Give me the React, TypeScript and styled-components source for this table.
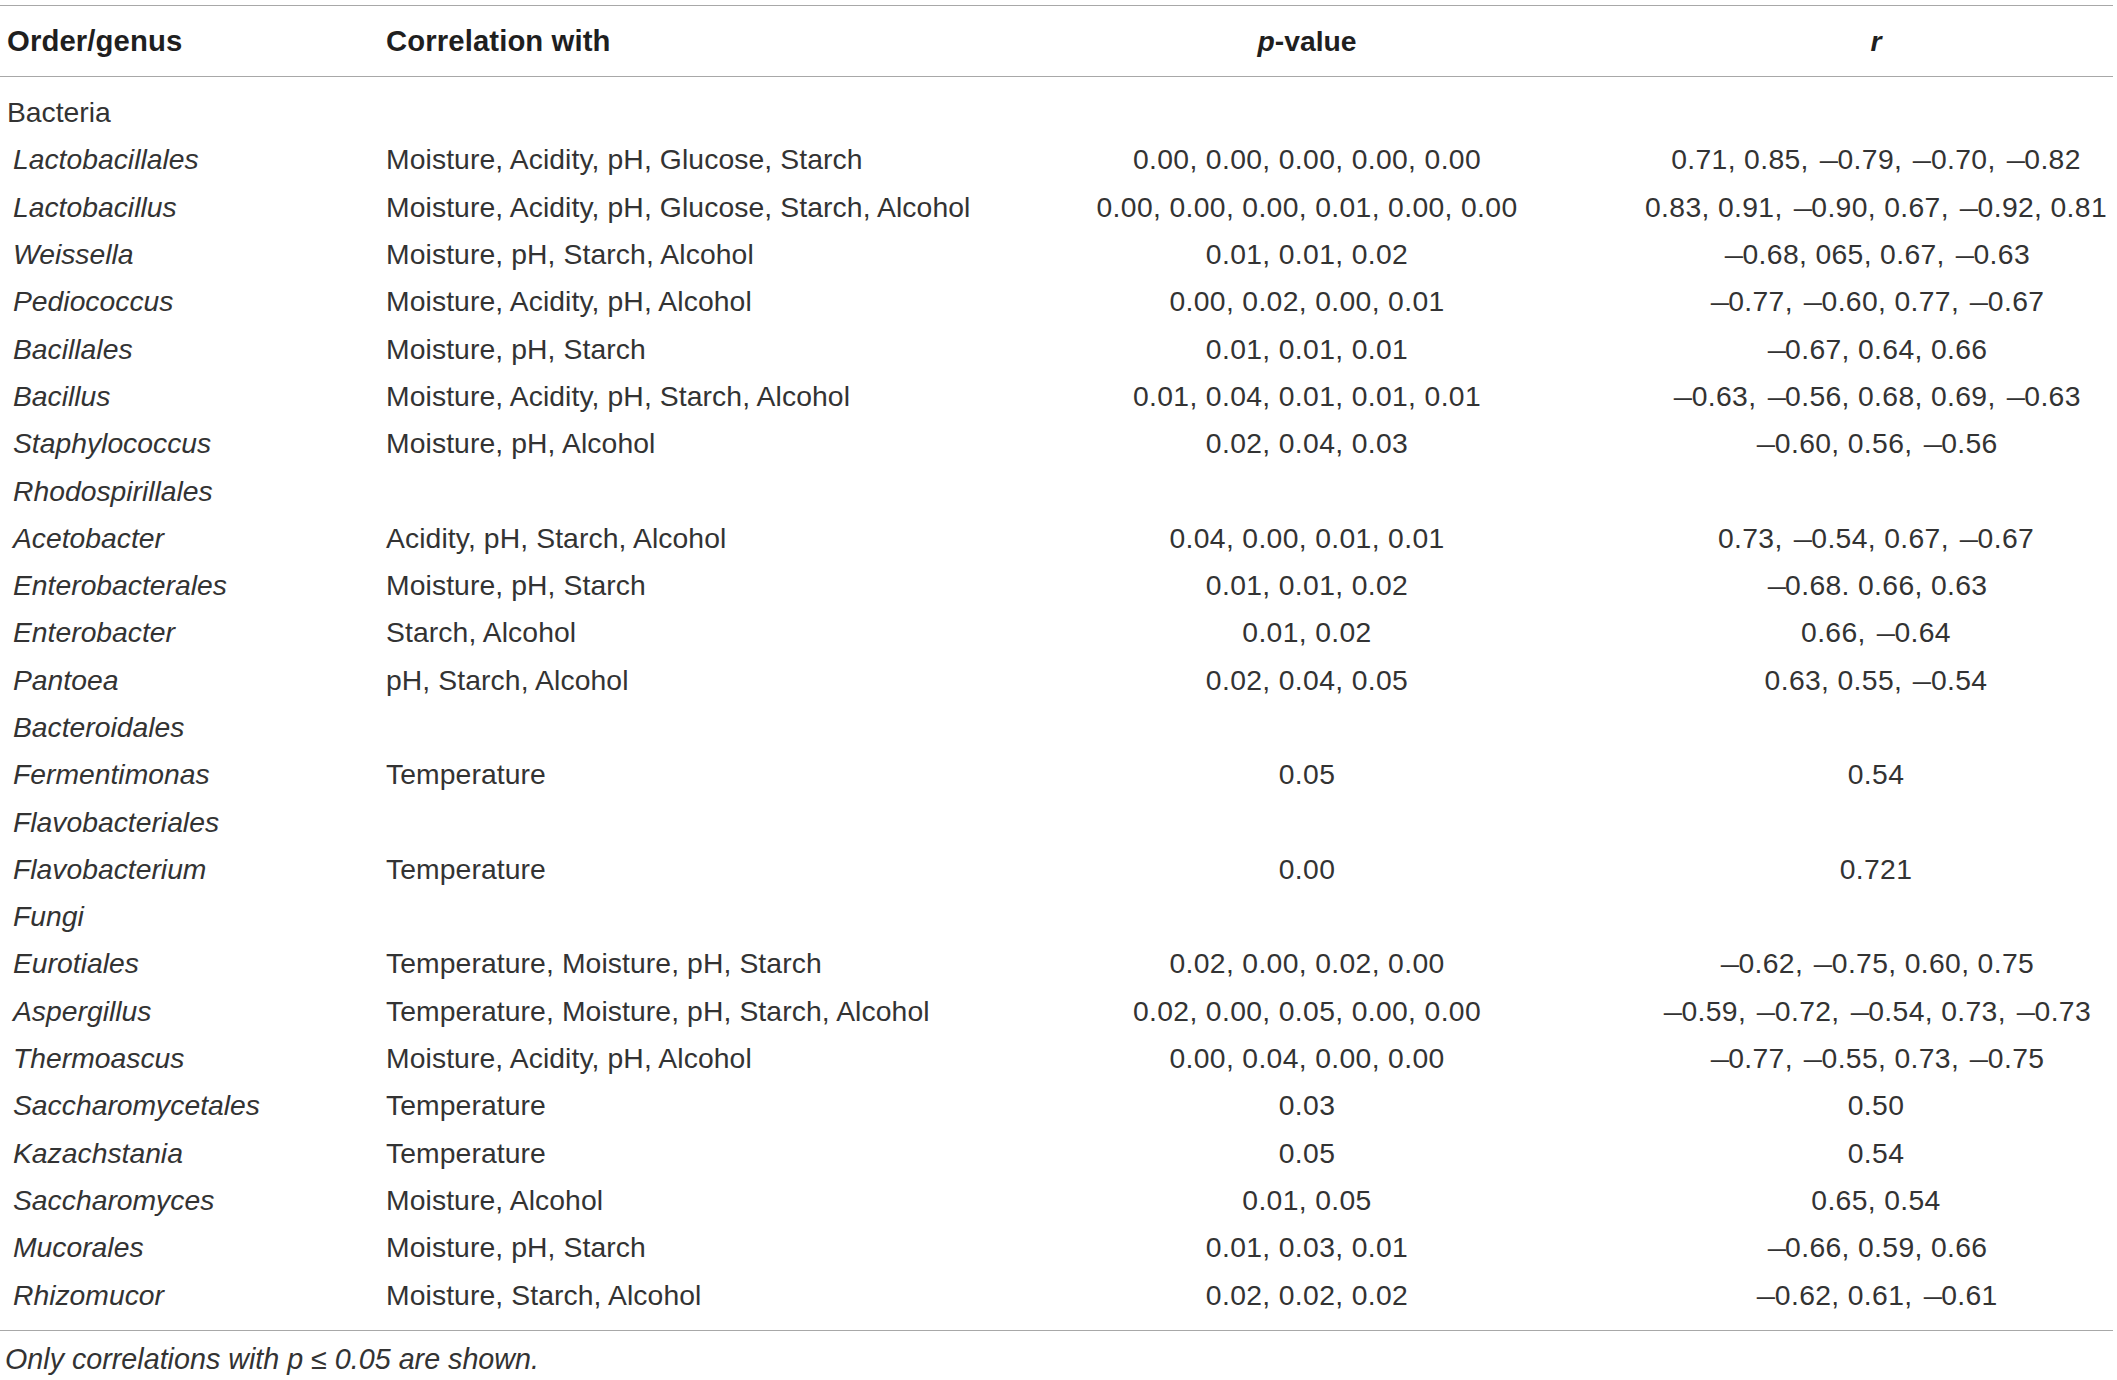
import * as React from 'react';
import styled, { createGlobalStyle } from 'styled-components';

const GlobalStyle = createGlobalStyle`
  html, body {
    margin: 0;
    padding: 0;
    background: #ffffff;
  }
  body {
    font-family: "Liberation Sans", Arial, sans-serif;
    color: #333333;
  }
`;

const Page = styled.div`
  width: 2113px;
  padding-top: 5px;
`;

const Table = styled.div`
  border-top: 1px solid #a8a8a8;
  border-bottom: 1px solid #a8a8a8;
  font-size: 28.3px;
`;

const Row = styled.div`
  display: grid;
  grid-template-columns: 379px 596px 664px 1fr;
  align-items: center;
  height: 47.3px;
  white-space: nowrap;
`;

const Head = styled(Row)`
  height: 70px;
  border-bottom: 1px solid #a8a8a8;
  font-size: 29.3px;
  font-weight: bold;
  color: #1f1f1f;
`;

const Body = styled.div`
  padding: 12px 0 11px;
`;

const Cell = styled.div`
  padding-left: 7px;
  letter-spacing: 0.1px;
`;

const NumCell = styled.div`
  text-align: center;
  letter-spacing: 0.35px;
`;

const HeadNum = styled.div`
  text-align: center;
  font-size: 28.3px;
`;

const Name = styled.div<{ $taxon?: boolean }>`
  font-style: ${({ $taxon }) => ($taxon ? 'italic' : 'normal')};
  padding-left: ${({ $taxon }) => ($taxon ? '13px' : '7px')};
`;

const Minus = styled.span`
  display: inline-block;
  width: 20.5px;
  transform: scaleX(1.16);
  transform-origin: left center;
  letter-spacing: 0;
`;

const Footnote = styled.p`
  margin: 0;
  padding: 12px 0 0 5px;
  font-size: 28.7px;
  font-style: italic;
  line-height: 32px;
`;

type Entry = {
  name: string;
  taxon?: boolean;
  with?: string;
  p?: string;
  r?: string;
};

const rows: Entry[] = [
  { name: 'Bacteria' },
  { name: 'Lactobacillales', taxon: true, with: 'Moisture, Acidity, pH, Glucose, Starch', p: '0.00, 0.00, 0.00, 0.00, 0.00', r: '0.71, 0.85, -0.79, -0.70, -0.82' },
  { name: 'Lactobacillus', taxon: true, with: 'Moisture, Acidity, pH, Glucose, Starch, Alcohol', p: '0.00, 0.00, 0.00, 0.01, 0.00, 0.00', r: '0.83, 0.91, -0.90, 0.67, -0.92, 0.81' },
  { name: 'Weissella', taxon: true, with: 'Moisture, pH, Starch, Alcohol', p: '0.01, 0.01, 0.02', r: '-0.68, 065, 0.67, -0.63' },
  { name: 'Pediococcus', taxon: true, with: 'Moisture, Acidity, pH, Alcohol', p: '0.00, 0.02, 0.00, 0.01', r: '-0.77, -0.60, 0.77, -0.67' },
  { name: 'Bacillales', taxon: true, with: 'Moisture, pH, Starch', p: '0.01, 0.01, 0.01', r: '-0.67, 0.64, 0.66' },
  { name: 'Bacillus', taxon: true, with: 'Moisture, Acidity, pH, Starch, Alcohol', p: '0.01, 0.04, 0.01, 0.01, 0.01', r: '-0.63, -0.56, 0.68, 0.69, -0.63' },
  { name: 'Staphylococcus', taxon: true, with: 'Moisture, pH, Alcohol', p: '0.02, 0.04, 0.03', r: '-0.60, 0.56, -0.56' },
  { name: 'Rhodospirillales', taxon: true },
  { name: 'Acetobacter', taxon: true, with: 'Acidity, pH, Starch, Alcohol', p: '0.04, 0.00, 0.01, 0.01', r: '0.73, -0.54, 0.67, -0.67' },
  { name: 'Enterobacterales', taxon: true, with: 'Moisture, pH, Starch', p: '0.01, 0.01, 0.02', r: '-0.68. 0.66, 0.63' },
  { name: 'Enterobacter', taxon: true, with: 'Starch, Alcohol', p: '0.01, 0.02', r: '0.66, -0.64' },
  { name: 'Pantoea', taxon: true, with: 'pH, Starch, Alcohol', p: '0.02, 0.04, 0.05', r: '0.63, 0.55, -0.54' },
  { name: 'Bacteroidales', taxon: true },
  { name: 'Fermentimonas', taxon: true, with: 'Temperature', p: '0.05', r: '0.54' },
  { name: 'Flavobacteriales', taxon: true },
  { name: 'Flavobacterium', taxon: true, with: 'Temperature', p: '0.00', r: '0.721' },
  { name: 'Fungi', taxon: true },
  { name: 'Eurotiales', taxon: true, with: 'Temperature, Moisture, pH, Starch', p: '0.02, 0.00, 0.02, 0.00', r: '-0.62, -0.75, 0.60, 0.75' },
  { name: 'Aspergillus', taxon: true, with: 'Temperature, Moisture, pH, Starch, Alcohol', p: '0.02, 0.00, 0.05, 0.00, 0.00', r: '-0.59, -0.72, -0.54, 0.73, -0.73' },
  { name: 'Thermoascus', taxon: true, with: 'Moisture, Acidity, pH, Alcohol', p: '0.00, 0.04, 0.00, 0.00', r: '-0.77, -0.55, 0.73, -0.75' },
  { name: 'Saccharomycetales', taxon: true, with: 'Temperature', p: '0.03', r: '0.50' },
  { name: 'Kazachstania', taxon: true, with: 'Temperature', p: '0.05', r: '0.54' },
  { name: 'Saccharomyces', taxon: true, with: 'Moisture, Alcohol', p: '0.01, 0.05', r: '0.65, 0.54' },
  { name: 'Mucorales', taxon: true, with: 'Moisture, pH, Starch', p: '0.01, 0.03, 0.01', r: '-0.66, 0.59, 0.66' },
  { name: 'Rhizomucor', taxon: true, with: 'Moisture, Starch, Alcohol', p: '0.02, 0.02, 0.02', r: '-0.62, 0.61, -0.61' },
];

// negatives are set with a long dash in the source; split on '-' and draw it wider
const Values = ({ text }: { text?: string }) => {
  if (!text) return null;
  const parts = text.split('-');
  return (
    <>
      {parts.map((part, i) => (
        <React.Fragment key={i}>
          {i > 0 && <Minus>{'\u2013'}</Minus>}
          {part}
        </React.Fragment>
      ))}
    </>
  );
};

export default function App() {
  return (
    <Page>
      <GlobalStyle />
      <Table>
        <Head>
          <Cell>Order/genus</Cell>
          <Cell>Correlation with</Cell>
          <HeadNum>
            <i>p</i>-value
          </HeadNum>
          <HeadNum>
            <i>r</i>
          </HeadNum>
        </Head>
        <Body>
          {rows.map((row) => (
            <Row key={row.name}>
              <Name $taxon={row.taxon}>{row.name}</Name>
              <Cell>{row.with}</Cell>
              <NumCell>
                <Values text={row.p} />
              </NumCell>
              <NumCell>
                <Values text={row.r} />
              </NumCell>
            </Row>
          ))}
        </Body>
      </Table>
      <Footnote>Only correlations with p ≤ 0.05 are shown.</Footnote>
    </Page>
  );
}
